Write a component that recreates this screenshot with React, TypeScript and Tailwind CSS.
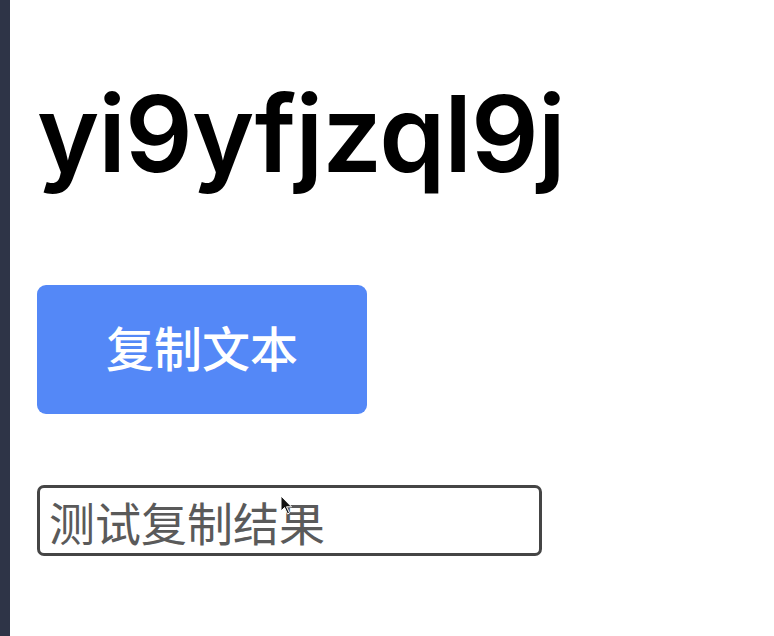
import React, { useState } from "react";

const App: React.FC = (): React.JSX.Element => {
  const [text] = useState<string>("yi9yfjzql9j");
  const [result, setResult] = useState<string>("");

  // copy the heading text into the input
  const handleCopy = () => {
    setResult(text);
  };

  return (
    <div className="flex min-h-screen bg-white">
      <div className="w-[10px] shrink-0 bg-[#2e3447]" />
      <div className="relative flex flex-1 flex-col items-start pl-[27px]">
        <h1
          className="mt-[81px] text-[106px] font-semibold leading-none tracking-[-1px] text-black"
          style={{ fontFamily: "Inter, 'Liberation Sans', sans-serif" }}
        >
          {text}
        </h1>
        <button
          className="mt-[98px] flex h-[129px] w-[330px] items-center justify-center rounded-[9px] bg-[#5488f7] pb-[8px] text-[48px] font-medium text-white"
          style={{ fontFamily: "'Noto Sans CJK SC', sans-serif" }}
          onClick={handleCopy}
        >
          复制文本
        </button>
        <input
          type="text"
          className="mt-[71px] h-[71px] w-[505px] rounded-[7px] border-[3px] border-[#454545] pl-[9px] text-[46px] text-[#222] outline-none placeholder:text-[#5a5a5a]"
          style={{ fontFamily: "'Noto Sans CJK SC', sans-serif" }}
          placeholder="测试复制结果"
          value={result}
          onChange={(e) => setResult(e.target.value)}
        />
        <svg
          className="absolute left-[270px] top-[495px]"
          width="13"
          height="21"
          viewBox="0 0 13 21"
        >
          <path
            d="M1 1 L1 16 L4.5 12.5 L7.5 19 L9.5 18 L6.5 11.8 L11.5 11.8 Z"
            fill="#111"
            stroke="#fff"
            strokeWidth="1"
          />
        </svg>
      </div>
    </div>
  );
};

export default App;
